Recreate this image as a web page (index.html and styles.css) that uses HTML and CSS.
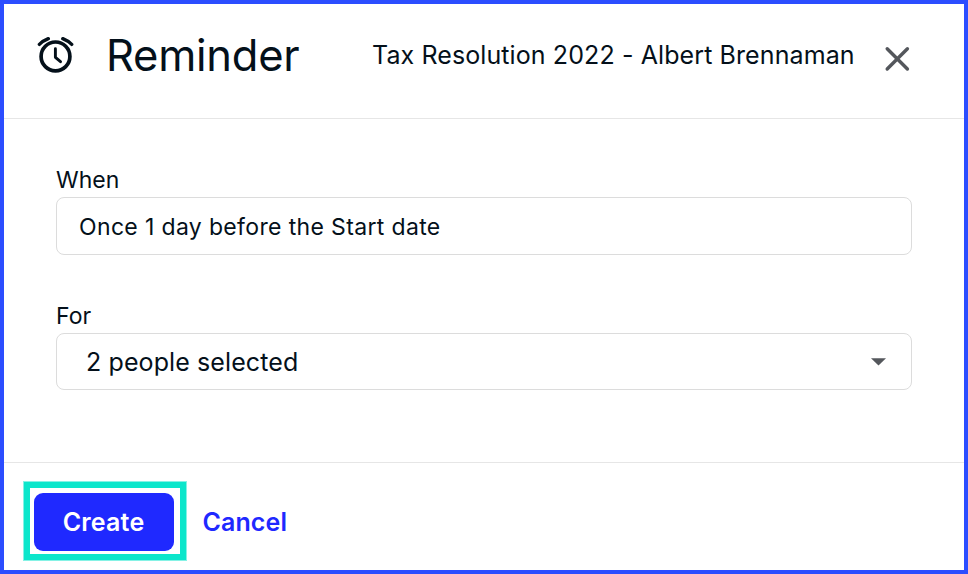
FILE: index.html
```html
<!DOCTYPE html>
<html lang="en">
<head>
    <meta charset="UTF-8">
    <meta name="viewport" content="width=device-width, initial-scale=1.0">
    <title>Reminder</title>
    <link rel="stylesheet" href="styles.css">
</head>
<body>
    <div class="modal">
        <header class="modal-header">
            <svg class="clock" width="38" height="38" viewBox="0 0 38 38" fill="none" stroke="#04101a" stroke-width="3.7" stroke-linecap="round" stroke-linejoin="round">
                <circle cx="18.5" cy="20.4" r="14.4"/>
                <path stroke-width="3.4" d="M2.4 8.4 Q6 4.8 11.3 2.7 M25.8 2.7 Q31 4.8 34.7 8.4"/>
                <path stroke-width="2.9" d="M18.4 12.8 V21.3 L23.5 25.7"/>
            </svg>
            <h1>Reminder</h1>
            <span class="subtitle">Tax Resolution 2022 - Albert Brennaman</span>
            <button class="close" aria-label="Close">
                <svg width="26" height="26" viewBox="0 0 26 26" fill="none" stroke="#54575c" stroke-width="3.4" stroke-linecap="round">
                    <path d="M3.2 2.8 L23.4 23 M23.4 2.8 L3.2 23"/>
                </svg>
            </button>
        </header>
        <div class="modal-body">
            <div class="field">
                <label>When</label>
                <div class="input">Once 1 day before the Start date</div>
            </div>
            <div class="field">
                <label>For</label>
                <div class="input select">
                    <span>2 people selected</span>
                    <svg width="15" height="8" viewBox="0 0 15 8"><path d="M0 0.2 H15 L7.5 7.4 Z" fill="#54575c"/></svg>
                </div>
            </div>
        </div>
        <footer class="modal-footer">
            <div class="highlight">
                <button class="create">Create</button>
            </div>
            <button class="cancel">Cancel</button>
        </footer>
    </div>
</body>
</html>
```
FILE: styles.css
```css
* {
    box-sizing: border-box;
}
body {
    margin: 0;
    font-family: Inter, sans-serif;
    color: #04101a;
}
button {
    border: 0;
    padding: 0;
    background: none;
    font-family: inherit;
    cursor: pointer;
}
svg {
    display: block;
}
.modal {
    display: flex;
    flex-direction: column;
    height: 574px;
    border: 4px solid #2b4dff;
    background-color: #fff;
}
.modal-header {
    display: flex;
    height: 115px;
    padding-left: 33px;
    border-bottom: 1px solid #e6e6e6;
}
.clock {
    margin-top: 32px;
}
h1 {
    width: 266px;
    margin: 24px 0 0 31px;
    font-size: 43.5px;
    font-weight: 400;
    letter-spacing: -0.25px;
    line-height: 54px;
    white-space: nowrap;
}
.subtitle {
    width: 512px;
    margin-top: 35px;
    font-size: 25px;
    letter-spacing: 0.1px;
    line-height: 32px;
    white-space: nowrap;
}
.close {
    align-self: flex-start;
    margin-top: 42px;
}
.modal-body {
    height: 343px;
    padding: 45px 52px 0;
}
.field {
    height: 136px;
}
label {
    display: block;
    height: 33px;
    padding-top: 2px;
    font-size: 23px;
    line-height: 28px;
}
.input {
    display: flex;
    align-items: center;
    height: 58px;
    padding: 2px 22px 0;
    border: 1px solid #dcdcdc;
    border-radius: 8px;
    font-size: 23px;
    letter-spacing: 0.35px;
}
.select {
    justify-content: space-between;
    height: 57px;
    padding: 1px 25px 0 29px;
    font-size: 25px;
    letter-spacing: 0.1px;
}
.modal-footer {
    display: flex;
    flex: 1;
    padding: 19px 0 0 20px;
    border-top: 1px solid #e6e6e6;
}
.highlight {
    width: 162px;
    height: 78px;
    padding: 5px 4px;
    border: 6px solid #0ce6cb;
    box-shadow: 0 0 0 1px rgba(12, 230, 203, 0.5);
}
.create {
    width: 140px;
    height: 58px;
    padding-right: 1px;
    border-radius: 9px;
    background-color: #1f29ff;
    color: #fff;
    font-size: 25px;
    font-weight: 600;
    letter-spacing: 0.2px;
}
.cancel {
    height: 80px;
    margin-left: 16.5px;
    color: #1f29ff;
    font-size: 25px;
    font-weight: 600;
    letter-spacing: 0.1px;
}
```
